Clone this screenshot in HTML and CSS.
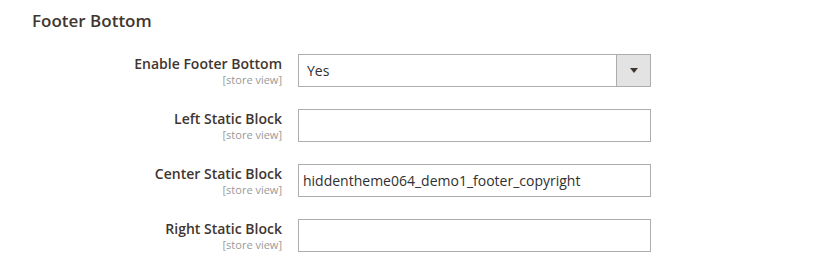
FILE: index.html
```html
<!DOCTYPE html>
<html>
    <head>
        <title>Footer Bottom</title>
        <link rel="stylesheet" href="styles.css">
    </head>
    <body>
        <div class='section'>
            <h2 class='section-title'>Footer Bottom</h2>
            <div class='field'>
                <div class='label'>
                    <span class='label-text'>Enable Footer Bottom</span>
                    <span class='scope'>[store view]</span>
                </div>
                <div class='control'>
                    <div class='select'>
                        <span class='select-value'>Yes</span>
                        <span class='select-btn'><span class='arrow'></span></span>
                    </div>
                </div>
            </div>
            <div class='field'>
                <div class='label'>
                    <span class='label-text'>Left Static Block</span>
                    <span class='scope'>[store view]</span>
                </div>
                <div class='control'>
                    <input type='text' class='input' value=''>
                </div>
            </div>
            <div class='field'>
                <div class='label'>
                    <span class='label-text'>Center Static Block</span>
                    <span class='scope'>[store view]</span>
                </div>
                <div class='control'>
                    <input type='text' class='input' value='hiddentheme064_demo1_footer_copyright'>
                </div>
            </div>
            <div class='field'>
                <div class='label'>
                    <span class='label-text'>Right Static Block</span>
                    <span class='scope'>[store view]</span>
                </div>
                <div class='control'>
                    <input type='text' class='input' value=''>
                </div>
            </div>
        </div>
    </body>
</html>
```

FILE: styles.css
```css
body{
    margin: 0;
    background-color: #ffffff;
    font-family: "Open Sans", "Liberation Sans", sans-serif;
    color: #41362f;
}
.section{
    padding: 9px 0 0 32px;
}
.section-title{
    margin: 0 0 21px 0;
    font-size: 17px;
    font-weight: 600;
    line-height: 24px;
    color: #41362f;
}
.field{
    display: flex;
    margin-bottom: 22px;
}
.label{
    width: 250px;
    display: flex;
    flex-direction: column;
    align-items: flex-end;
    padding-right: 16px;
}
.label-text{
    font-size: 14px;
    font-weight: 600;
    line-height: 18px;
    padding-top: 1px;
}
.scope{
    font-size: 11px;
    line-height: 14px;
    color: #999999;
}
.control{
    width: 353px;
}
.select{
    display: flex;
    height: 33px;
    box-sizing: border-box;
    border: 1px solid #adadad;
    background: #ffffff;
}
.select-value{
    flex: 1;
    font-size: 14px;
    line-height: 31px;
    padding-left: 8px;
    color: #303030;
}
.select-btn{
    width: 33px;
    border-left: 1px solid #adadad;
    background-color: #e3e3e3;
    display: flex;
    justify-content: center;
    align-items: center;
}
.arrow{
    width: 0;
    height: 0;
    border-left: 4px solid transparent;
    border-right: 4px solid transparent;
    border-top: 5px solid #41362f;
}
.input{
    display: block;
    width: 100%;
    height: 33px;
    box-sizing: border-box;
    border: 1px solid #adadad;
    border-radius: 0;
    padding: 0 4px;
    margin: 0;
    font-family: "Open Sans", "Liberation Sans", sans-serif;
    font-size: 14px;
    color: #303030;
    outline: none;
}
```
